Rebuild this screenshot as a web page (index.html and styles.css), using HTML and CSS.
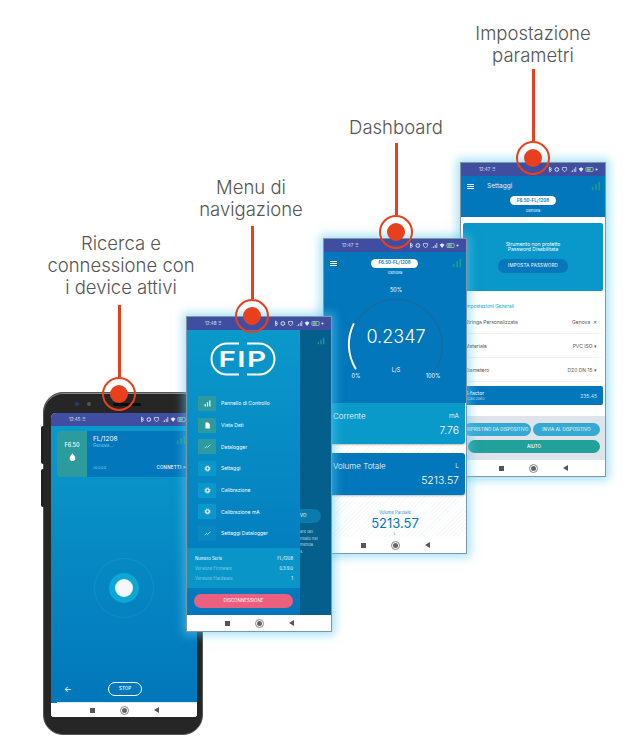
FILE: index.html
```html
<!DOCTYPE html>
<html lang="it">
<head>
    <meta charset="UTF-8">
    <meta name="viewport" content="width=device-width, initial-scale=1.0">
    <title>App FIP</title>
    <link rel="stylesheet" href="styles.css">
</head>
<body>
    <svg class="defs" width="0" height="0">
        <symbol id="i-bars" viewBox="0 0 12 12"><path d="M1 7h2v4H1zM5 4h2v7H5zM9 1h2v10H9z"/></symbol>
        <symbol id="i-doc" viewBox="0 0 12 12"><path d="M2.500 1H7l3 3v7H2.500z"/></symbol>
        <symbol id="i-line" viewBox="0 0 12 12"><path d="M1 9l3-3 2 1.500L11 3" fill="none" stroke="currentColor" stroke-width="1"/></symbol>
        <symbol id="i-gear" viewBox="0 0 12 12"><circle cx="6" cy="6" r="3" fill="none" stroke="currentColor" stroke-width="2"/><circle cx="6" cy="6" r="4.600" fill="none" stroke="currentColor" stroke-width="1.200" stroke-dasharray="1.800 1.800"/></symbol>
        <symbol id="i-status" viewBox="0 0 62 8">
            <path d="M2 1l2.500 2L2 5V1l0 6 2.500-2L2 3" fill="none" stroke="currentColor" stroke-width=".8"/>
            <circle cx="11" cy="4" r="2.300" fill="none" stroke="currentColor" stroke-width="1.200"/>
            <path d="M18 1.500h5v3l-2.500 2.500-2.500-2.500z" fill="none" stroke="currentColor" stroke-width=".9"/>
            <path d="M28 6.500h1v.5h-1zM30 5h1v2h-1zM32 3h1v4h-1zM34 1h1v6h-1z"/>
            <path d="M38 3l3-1.800 3 1.800-3 4z"/>
            <rect x="47" y="1.500" width="9" height="5" rx="1" fill="none" stroke="currentColor" stroke-width=".7"/>
            <rect x="48" y="2.500" width="5" height="3" fill="#5fd068"/>
            <path d="M59 3h1.500V2l1 2-1 2V5H59z"/>
        </symbol>
    </svg>

    <main class="canvas">
        <h2 class="caption caption-search">Ricerca e<br>connessione con<br>i device attivi</h2>
        <h2 class="caption caption-menu">Menu di<br>navigazione</h2>
        <h2 class="caption caption-dash">Dashboard</h2>
        <h2 class="caption caption-param">Impostazione<br>parametri</h2>

        <!-- telefono -->
        <div class="phone">
            <span class="phone-btn phone-btn-a"></span>
            <span class="phone-btn phone-btn-b"></span>
            <div class="phone-top">
                <span class="cam cam-blue"></span>
                <span class="cam"></span>
                <span class="speaker"></span>
            </div>
            <div class="screen screen-search">
                <div class="status status-search"><span>12:45 ⠿</span><svg class="status-icons"><use href="#i-status"/></svg></div>
                <div class="search-body">
                    <div class="device-card">
                        <div class="device-tile">
                            <span>F6.50</span>
                            <svg class="drop" viewBox="0 0 10 12"><path d="M5 0c2 3 4 4.500 4 7a4 4 0 0 1-8 0c0-2.500 2-4 4-7z"/></svg>
                        </div>
                        <div class="device-info">
                            <div class="device-head">
                                <div>
                                    <div class="device-name">FL/1208</div>
                                    <div class="device-place">Genova ...</div>
                                </div>
                                <svg class="signal"><use href="#i-bars"/></svg>
                            </div>
                            <div class="device-foot">
                                <span class="device-ver">v0.3.0.0</span>
                                <span class="device-link">CONNETTI &gt;</span>
                            </div>
                        </div>
                    </div>
                    <div class="pulse-area">
                        <div class="pulse-ring"><div class="pulse-mid"><div class="pulse-dot"></div></div></div>
                    </div>
                    <div class="search-foot">
                        <span class="back">←</span>
                        <span class="stop">STOP</span>
                    </div>
                </div>
                <div class="navbar"><span class="nav-square"></span><span class="nav-circle"></span><span class="nav-back"></span></div>
            </div>
        </div>

        <!-- impostazioni -->
        <div class="screen screen-param">
            <div class="status"><span>12:47 ⠿</span><svg class="status-icons"><use href="#i-status"/></svg></div>
            <header class="param-head">
                <div class="title-row">
                    <span class="burger"></span>
                    <span class="title">Settaggi</span>
                    <svg class="signal"><use href="#i-bars"/></svg>
                </div>
                <span class="pill">F6.50-FL/1208</span>
                <span class="place">Genova</span>
            </header>
            <div class="param-body">
                <section class="lock-panel">
                    <p>Strumento non protetto<br>Password Disabilitata</p>
                    <span class="lock-btn">IMPOSTA PASSWORD</span>
                </section>
                <h3 class="group-title">Impostazioni Generali</h3>
                <div class="param-row"><span>Stringa Personalizzata</span><span>Genova &nbsp;✕</span></div>
                <div class="param-row"><span>Materiale</span><span>PVC ISO ▾</span></div>
                <div class="param-row"><span>Diametero</span><span>D20 DN 15 ▾</span></div>
                <div class="kfactor">
                    <div>K-factor<small>*Calcolato</small></div>
                    <span>235.45</span>
                </div>
            </div>
            <div class="param-actions">
                <div class="action-pair">
                    <span class="action-btn">RIPRISTINO DA DISPOSITIVO</span>
                    <span class="action-btn">INVIA AL DISPOSITIVO</span>
                </div>
                <span class="help-btn">AIUTO</span>
            </div>
            <div class="navbar"><span class="nav-square"></span><span class="nav-circle"></span><span class="nav-back"></span></div>
        </div>

        <!-- dashboard -->
        <div class="screen screen-dash">
            <div class="status"><span>12:47 ⠿</span><svg class="status-icons"><use href="#i-status"/></svg></div>
            <div class="dash-top">
                <div class="dash-head">
                    <span class="burger"></span>
                    <span class="pill">F6.50-FL/1208</span>
                    <svg class="signal"><use href="#i-bars"/></svg>
                </div>
                <span class="place">Genova</span>
                <div class="gauge">
                    <svg class="gauge-arc" viewBox="0 0 144 110">
                        <path class="arc-track" d="M32 91A47 47 0 1 1 114 91"/>
                        <path class="arc-value" d="M32 91A47 47 0 0 1 30 46"/>
                    </svg>
                    <span class="gauge-mid">50%</span>
                    <span class="gauge-value">0.2347</span>
                    <span class="gauge-unit">L/S</span>
                    <span class="gauge-min">0%</span>
                    <span class="gauge-max">100%</span>
                </div>
            </div>
            <div class="dash-body">
                <div class="stat stat-light">
                    <div class="stat-row"><span>Corrente</span><span class="stat-unit">mA</span></div>
                    <div class="stat-value">7.76</div>
                </div>
                <div class="stat stat-dark">
                    <div class="stat-row"><span>Volume Totale</span><span class="stat-unit">L</span></div>
                    <div class="stat-value">5213.57</div>
                </div>
                <div class="partial">
                    <span class="partial-label">Volume Parziale</span>
                    <span class="partial-value">5213.57</span>
                    <span class="partial-unit">L</span>
                </div>
            </div>
            <div class="navbar"><span class="nav-square"></span><span class="nav-circle"></span><span class="nav-back"></span></div>
        </div>

        <!-- menu -->
        <div class="screen screen-menu">
            <div class="status"><span>12:48 ⠿</span><svg class="status-icons"><use href="#i-status"/></svg></div>
            <div class="menu-wrap">
                <nav class="drawer">
                    <svg class="logo" viewBox="0 0 66 34">
                        <path d="M29 1.500H17a15.500 15.500 0 0 0 0 31h12M37 1.500h12a15.500 15.500 0 0 1 0 31H37" fill="none" stroke="#fff" stroke-width="2"/>
                        <text x="33" y="25" text-anchor="middle">FIP</text>
                    </svg>
                    <ul class="menu">
                        <li><span class="tile tile-teal"><svg><use href="#i-bars"/></svg></span>Pannello di Controllo</li>
                        <li><span class="tile tile-teal"><svg><use href="#i-doc"/></svg></span>Vista Dati</li>
                        <li><span class="tile tile-teal"><svg><use href="#i-line"/></svg></span>Datalogger</li>
                        <li><span class="tile"><svg><use href="#i-gear"/></svg></span>Settaggi</li>
                        <li><span class="tile"><svg><use href="#i-gear"/></svg></span>Calibrazione</li>
                        <li><span class="tile"><svg><use href="#i-gear"/></svg></span>Calibrazione mA</li>
                        <li><span class="tile tile-dim"><svg><use href="#i-line"/></svg></span>Settaggi Datalogger</li>
                    </ul>
                    <div class="info">
                        <div class="info-row info-strong"><span>Numero Serie</span><span>FL/1208</span></div>
                        <div class="info-row"><span>Versione Firmware</span><span class="info-val">0.3.9.0</span></div>
                        <div class="info-row"><span>Versione Hardware</span><span class="info-val">1</span></div>
                    </div>
                    <div class="logout-wrap"><span class="logout">DISCONNESSIONE</span></div>
                </nav>
                <aside class="behind">
                    <svg class="signal"><use href="#i-bars"/></svg>
                    <span class="behind-btn">VO</span>
                    <p>are del<br>rmato nel<br>menda<br>s.</p>
                </aside>
            </div>
            <div class="navbar"><span class="nav-square"></span><span class="nav-circle"></span><span class="nav-back"></span></div>
        </div>

        <div class="callout callout-search"><span class="callout-line"></span><span class="callout-ring"><span class="callout-dot"></span></span></div>
        <div class="callout callout-menu"><span class="callout-line"></span><span class="callout-ring"><span class="callout-dot"></span></span></div>
        <div class="callout callout-dash"><span class="callout-line"></span><span class="callout-ring"><span class="callout-dot"></span></span></div>
        <div class="callout callout-param"><span class="callout-line"></span><span class="callout-ring"><span class="callout-dot"></span></span></div>
    </main>
</body>
</html>
```

FILE: styles.css
```css
* {
    box-sizing: border-box;
}
body {
    margin: 0;
    background: #fff;
    font-family: Inter, "Liberation Sans", sans-serif;
}
.defs {
    position: absolute;
}
.canvas {
    position: relative;
    width: 640px;
    height: 754px;
    overflow: hidden;
}

/* didascalie */
.caption {
    position: absolute;
    margin: 0;
    font-weight: 300;
    font-size: 18.500px;
    line-height: 22px;
    color: #555;
    text-align: center;
    white-space: nowrap;
    transform: translateX(-50%);
}
.caption-search { left: 121px; top: 232px; }
.caption-menu { left: 251px; top: 176px; }
.caption-dash { left: 396px; top: 116px; }
.caption-param { left: 533px; top: 22px; }

/* richiami rossi */
.callout {
    position: absolute;
    display: flex;
    flex-direction: column;
    align-items: center;
    width: 34px;
    z-index: 10;
}
.callout-line {
    width: 3px;
    background: #e8401c;
}
.callout-ring {
    display: flex;
    align-items: center;
    justify-content: center;
    width: 34px;
    height: 34px;
    border: 2.500px solid #e8401c;
    border-radius: 50%;
}
.callout-dot {
    width: 18px;
    height: 18px;
    border-radius: 50%;
    background: #e8401c;
}
.callout-search { left: 102px; top: 305px; }
.callout-search .callout-line { height: 72px; }
.callout-menu { left: 235px; top: 226px; }
.callout-menu .callout-line { height: 73px; }
.callout-dash { left: 379px; top: 143px; }
.callout-dash .callout-line { height: 72px; }
.callout-param { left: 516px; top: 69px; }
.callout-param .callout-line { height: 72px; }

/* telefono */
.phone {
    position: absolute;
    left: 43px;
    top: 392px;
    width: 160px;
    height: 343px;
    padding: 0 7px;
    background: #262626;
    border: 1px solid #555;
    border-radius: 20px;
    box-shadow: inset 0 1px 0 #888;
}
.phone-btn {
    position: absolute;
    left: -3px;
    width: 3px;
    background: #222;
    border-radius: 2px 0 0 2px;
}
.phone-btn-a { top: 33px; height: 38px; }
.phone-btn-b { top: 76px; height: 38px; }
.phone-top {
    display: flex;
    align-items: center;
    gap: 8px;
    height: 20px;
    padding: 2px 0 0 24px;
}
.cam {
    width: 4px;
    height: 4px;
    border-radius: 50%;
    background: #555;
}
.cam-blue {
    background: #2b3a80;
}
.speaker {
    width: 28px;
    height: 3px;
    margin-left: 14px;
    background: #0c0c0c;
    border-radius: 2px;
}

/* schermate */
.screen {
    display: flex;
    flex-direction: column;
    background: #fff;
    overflow: hidden;
    font-size: 5px;
    color: #fff;
}
.screen-search {
    width: 146px;
    height: 304px;
    border-radius: 5px 5px 3px 3px;
}
.screen-search .navbar {
    height: 14px;
}
.screen-menu,
.screen-dash,
.screen-param {
    position: absolute;
    border: 1px solid #8296a8;
    box-shadow: 0 0 9px 3px rgba(90, 200, 240, .55);
}
.screen-menu { left: 186px; top: 316px; width: 146px; height: 316px; z-index: 4; }
.screen-dash { left: 323px; top: 238px; width: 144px; height: 316px; z-index: 3; }
.screen-param { left: 460px; top: 162px; width: 146px; height: 315px; z-index: 2; }

.status {
    display: flex;
    flex: none;
    align-items: center;
    justify-content: space-between;
    height: 13px;
    padding: 0 7px 0 18px;
    background: #3f4ea1;
    font-size: 4.500px;
    color: #dfe3f5;
}
.status-icons {
    width: 50px;
    height: 7px;
    fill: #e6e9f7;
    color: #e6e9f7;
}
.navbar {
    display: flex;
    flex: none;
    align-items: center;
    justify-content: center;
    gap: 27px;
    height: 16px;
    background: #fff;
}
.nav-square {
    width: 5px;
    height: 5px;
    background: #555;
}
.nav-circle {
    width: 5px;
    height: 5px;
    border-radius: 50%;
    background: #666;
    outline: 1px solid #888;
    outline-offset: 1px;
}
.nav-back {
    width: 0;
    height: 0;
    border-top: 3.500px solid transparent;
    border-bottom: 3.500px solid transparent;
    border-right: 5px solid #555;
}
.signal {
    flex: none;
    width: 10px;
    height: 10px;
    fill: #14a08e;
}
.burger {
    flex: none;
    width: 7px;
    height: 5px;
    border-top: 1px solid #fff;
    border-bottom: 1px solid #fff;
    background: linear-gradient(#fff, #fff) center / 100% 1px no-repeat;
}
.pill {
    padding: 1.500px 7px;
    background: #fff;
    border-radius: 5px;
    font-size: 4.500px;
    font-weight: 600;
    line-height: 6px;
    color: #0277bb;
    white-space: nowrap;
}
.place {
    font-size: 4px;
}

/* ricerca */
.search-body {
    display: flex;
    flex: 1;
    flex-direction: column;
    padding: 5px 0 0 6px;
    background: linear-gradient(#0a99cb, #0277bb);
}
.device-card {
    display: flex;
    height: 46px;
    margin-right: 6px;
    background: #0277bb;
    border-radius: 3px;
    overflow: hidden;
}
.device-tile {
    display: flex;
    flex: none;
    flex-direction: column;
    align-items: center;
    justify-content: center;
    gap: 5px;
    width: 30px;
    padding-bottom: 4px;
    background: #2d9a9e;
    font-size: 5.500px;
    font-weight: 500;
}
.drop {
    width: 7px;
    height: 9px;
    fill: #fff;
}
.device-info {
    display: flex;
    flex: 1;
    flex-direction: column;
    justify-content: space-between;
    padding: 4px 5px 7px 6px;
}
.device-head,
.device-foot {
    display: flex;
    align-items: center;
    justify-content: space-between;
}
.device-head {
    align-items: flex-start;
}
.device-name {
    font-size: 6.500px;
    line-height: 8px;
}
.device-place {
    font-size: 4.500px;
    color: #8fd0ea;
}
.device-ver {
    font-size: 3.500px;
    color: #8fd0ea;
}
.device-link {
    font-size: 4.500px;
    font-weight: 500;
    letter-spacing: .2px;
}
.pulse-area {
    display: flex;
    flex: 1;
    align-items: center;
    justify-content: center;
    padding: 22px 6px 0 0;
}
.pulse-ring {
    display: flex;
    align-items: center;
    justify-content: center;
    width: 60px;
    height: 60px;
    border: 1px solid rgba(255, 255, 255, .06);
    border-radius: 50%;
}
.pulse-mid {
    display: flex;
    align-items: center;
    justify-content: center;
    width: 30px;
    height: 30px;
    border-radius: 50%;
    background: #0ba8d4;
}
.pulse-dot {
    width: 18px;
    height: 18px;
    border-radius: 50%;
    background: #f4f8fb;
}
.search-foot {
    display: flex;
    flex: none;
    align-items: center;
    height: 27px;
    border-bottom: 1px solid #d8eef8;
}
.back {
    width: 51px;
    padding-left: 7px;
    font-size: 8px;
}
.stop {
    width: 34px;
    height: 14px;
    border: 1px solid #fff;
    border-radius: 7px;
    font-size: 4.500px;
    font-weight: 500;
    line-height: 12px;
    text-align: center;
}

/* menu */
.menu-wrap {
    display: flex;
    flex: 1;
    min-height: 0;
}
.drawer {
    display: flex;
    flex: none;
    flex-direction: column;
    width: 113px;
    background: linear-gradient(#0a99cb, #0277bb);
}
.logo {
    flex: none;
    width: 66px;
    height: 34px;
    margin: 12px 0 0 23px;
}
.logo text {
    font-size: 22px;
    font-weight: 600;
    fill: #fff;
    letter-spacing: 1px;
    transform-origin: 33px 17px;
    transform: scaleX(1.35);
}
.menu {
    flex: 1;
    margin: 16.500px 0 0;
    padding: 0 0 0 11px;
    list-style: none;
}
.menu li {
    display: flex;
    align-items: center;
    gap: 5px;
    height: 21.700px;
    font-size: 5px;
}
.tile {
    display: flex;
    flex: none;
    align-items: center;
    justify-content: center;
    width: 18px;
    height: 15px;
    background: #0a97cb;
    color: #fff;
    fill: #fff;
}
.tile svg {
    width: 7px;
    height: 7px;
}
.tile-teal {
    background: #2d9a9e;
}
.tile-dim {
    background: #0a88c2;
}
.info {
    display: flex;
    flex-direction: column;
    justify-content: center;
    gap: 5px;
    height: 40px;
    padding: 0 7px 0 8px;
    background: #0a95c9;
}
.info-row {
    display: flex;
    justify-content: space-between;
    font-size: 4.200px;
    line-height: 5px;
    color: #7fd0ec;
}
.info-strong,
.info-val {
    color: #fff;
}
.logout-wrap {
    flex: none;
    height: 27px;
    padding: 6px 7px;
}
.logout {
    display: block;
    height: 14px;
    background: #ec607f;
    border-radius: 7px;
    font-size: 4.500px;
    line-height: 14px;
    text-align: center;
}
.behind {
    display: flex;
    flex: 1;
    flex-direction: column;
    padding-top: 7px;
    background: #045f8c;
}
.behind .signal {
    align-self: flex-end;
    margin-right: 6px;
    width: 8px;
    height: 8px;
}
.behind-btn {
    width: 21px;
    height: 14px;
    margin-top: 164px;
    background: #0a7cab;
    border-radius: 0 7px 7px 0;
    font-size: 4.500px;
    line-height: 14px;
}
.behind p {
    margin: 6px 0 0;
    font-size: 4px;
    line-height: 6.500px;
    color: #b9dcea;
    white-space: nowrap;
}

/* dashboard */
.dash-top {
    flex: none;
    display: flex;
    flex-direction: column;
    align-items: center;
    height: 151px;
    padding-top: 6px;
    background: #0277bb;
}
.dash-head {
    display: flex;
    align-items: center;
    justify-content: space-between;
    width: 100%;
    padding: 0 4px 0 6px;
}
.dash-top .place {
    margin-top: 2px;
}
.gauge {
    position: relative;
    width: 142px;
    height: 110px;
    margin-top: 3px;
}
.gauge-arc {
    position: absolute;
    inset: 0;
    width: 100%;
    height: 100%;
}
.arc-track {
    fill: none;
    stroke: #176ba3;
    stroke-width: 1.500;
}
.arc-value {
    fill: none;
    stroke: #fff;
    stroke-width: 2;
    stroke-linecap: round;
}
.gauge span {
    position: absolute;
    transform: translateX(-50%);
}
.gauge-mid { left: 72px; top: 9px; font-size: 5.500px; }
.gauge-value { left: 72px; top: 48px; font-size: 18px; font-weight: 300; line-height: 22px; }
.gauge-unit { left: 72px; top: 89px; font-size: 5.500px; }
.gauge-min { left: 32px; top: 95px; font-size: 5.500px; }
.gauge-max { left: 109px; top: 95px; font-size: 5.500px; }
.dash-body {
    flex: 1;
    min-height: 0;
    display: flex;
    flex-direction: column;
    background: repeating-linear-gradient(135deg, #fff 0 2px, #f8f9fa 2px 3px);
}
.stat {
    display: flex;
    flex: none;
    flex-direction: column;
    height: 41px;
    margin: 0 1px;
    padding: 9px 6px 0 8px;
    border-radius: 0 0 3px 3px;
    box-shadow: 0 1px 2px rgba(0, 0, 0, .25);
    font-size: 8px;
}
.stat-light {
    background: #0a9aca;
}
.stat-dark {
    height: 42px;
    margin-top: 9px;
    background: #0277bb;
    border-radius: 3px;
}
.stat-row {
    display: flex;
    justify-content: space-between;
    line-height: 9px;
    font-weight: 300;
}
.stat-unit {
    font-size: 6.500px;
}
.stat-value {
    margin-top: 3px;
    font-size: 10.500px;
    font-weight: 300;
    line-height: 14px;
    text-align: right;
}
.partial {
    display: flex;
    flex: 1;
    flex-direction: column;
    align-items: center;
    padding-top: 15px;
    color: #1a8fc7;
}
.partial-label {
    font-size: 4.200px;
    line-height: 5px;
}
.partial-value {
    margin-top: 1px;
    font-size: 13px;
    line-height: 15px;
    color: #0277bb;
}
.partial-unit {
    font-size: 4px;
    color: #888;
}

/* impostazioni */
.param-head {
    display: flex;
    flex: none;
    flex-direction: column;
    align-items: center;
    height: 41px;
    background: #0277bb;
}
.title-row {
    display: flex;
    align-items: center;
    gap: 13px;
    width: 100%;
    height: 20px;
    padding: 0 4px 0 6px;
}
.title {
    flex: 1;
    font-size: 6.500px;
    color: #e4f2fa;
}
.param-head .place {
    margin-top: 3px;
}
.param-body {
    display: flex;
    flex: 1;
    flex-direction: column;
    padding: 6px 2px 0;
    color: #555;
}
.lock-panel {
    display: flex;
    flex: none;
    flex-direction: column;
    align-items: center;
    justify-content: center;
    height: 68px;
    background: #0a97c9;
    border-radius: 2px;
    color: #fff;
}
.lock-panel p {
    margin: 0 0 6px;
    font-size: 5px;
    line-height: 5.500px;
    text-align: center;
}
.lock-btn {
    width: 70px;
    height: 14px;
    background: #0677bb;
    border-radius: 7px;
    font-size: 4.500px;
    letter-spacing: .2px;
    line-height: 14px;
    text-align: center;
}
.group-title {
    margin: 12px 0 1px 2px;
    font-size: 4.800px;
    font-weight: 400;
    line-height: 6px;
    color: #0f9fd0;
}
.param-row {
    display: flex;
    flex: none;
    align-items: center;
    justify-content: space-between;
    height: 24px;
    padding: 0 6px 0 2px;
    border-bottom: 1px solid #f0f2f4;
    font-size: 5px;
}
.kfactor {
    display: flex;
    flex: none;
    align-items: center;
    justify-content: space-between;
    height: 19px;
    margin-top: 4px;
    padding: 0 6px 0 2px;
    background: #0277bb;
    border-radius: 2px;
    font-size: 5px;
    line-height: 6px;
    color: #fff;
}
.kfactor small {
    display: block;
    font-size: 4px;
    color: #9fd4ee;
}
.kfactor span {
    color: #cde6f5;
}
.param-actions {
    display: flex;
    flex: none;
    flex-direction: column;
    gap: 4px;
    height: 44px;
    padding: 7px 5px 0 3px;
    background: #dfe3ea;
}
.action-pair {
    display: flex;
    gap: 2px;
}
.action-btn {
    flex: 1;
    height: 13px;
    background: #35a9d2;
    border-radius: 7px;
    font-size: 4.300px;
    letter-spacing: .1px;
    line-height: 13px;
    text-align: center;
    white-space: nowrap;
}
.help-btn {
    height: 13px;
    margin-left: 4px;
    background: #22a09c;
    border-radius: 7px;
    font-size: 4.500px;
    font-weight: 500;
    line-height: 13px;
    text-align: center;
}
```
